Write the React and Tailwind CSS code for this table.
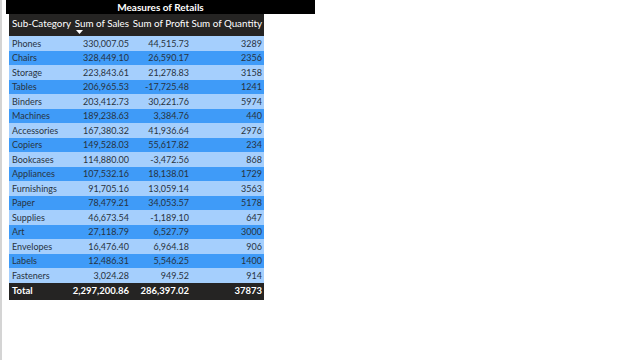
import React from "react";

const rows = [
  ["Phones", "330,007.05", "44,515.73", "3289"],
  ["Chairs", "328,449.10", "26,590.17", "2356"],
  ["Storage", "223,843.61", "21,278.83", "3158"],
  ["Tables", "206,965.53", "-17,725.48", "1241"],
  ["Binders", "203,412.73", "30,221.76", "5974"],
  ["Machines", "189,238.63", "3,384.76", "440"],
  ["Accessories", "167,380.32", "41,936.64", "2976"],
  ["Copiers", "149,528.03", "55,617.82", "234"],
  ["Bookcases", "114,880.00", "-3,472.56", "868"],
  ["Appliances", "107,532.16", "18,138.01", "1729"],
  ["Furnishings", "91,705.16", "13,059.14", "3563"],
  ["Paper", "78,479.21", "34,053.57", "5178"],
  ["Supplies", "46,673.54", "-1,189.10", "647"],
  ["Art", "27,118.79", "6,527.79", "3000"],
  ["Envelopes", "16,476.40", "6,964.18", "906"],
  ["Labels", "12,486.31", "5,546.25", "1400"],
  ["Fasteners", "3,024.28", "949.52", "914"],
];

const font = { fontFamily: 'Lato, "Open Sans", sans-serif' };

export default function App() {
  return (
    <div className="w-[640px] h-[360px] bg-white overflow-hidden border-l-2 border-[#d4d4d4]" style={font}>
      <div className="ml-[4px] w-[309px] h-[14px] bg-black text-white text-[10px] font-bold flex items-center justify-center leading-none">
        Measures of Retails
      </div>
      <div className="ml-[7px] w-[255px]">
        <div className="grid grid-cols-[62px_60px_60px_73px] h-[22px] bg-[#252423] text-white text-[9.8px] leading-none whitespace-nowrap">
          <div className="pl-[3px] pt-[5px]">Sub-Category</div>
          <div className="relative flex justify-end pr-[2px] pt-[5px]">
            Sum of Sales
            <svg className="absolute left-[5px] top-[16px]" width="7" height="4" viewBox="0 0 7 4">
              <path d="M0 0 L7 0 L3.5 4 Z" fill="white" />
            </svg>
          </div>
          <div className="flex justify-end pr-[2px] pt-[5px]">Sum of Profit</div>
          <div className="flex justify-end pr-[2px] pt-[5px]">Sum of Quantity</div>
        </div>
        {rows.map((r, i) => (
          <div
            key={r[0]}
            className={`grid grid-cols-[62px_60px_60px_73px] h-[14.5px] items-center text-[9px] leading-none text-[#28333f] whitespace-nowrap ${
              i % 2 === 0 ? "bg-[#a5cffd]" : "bg-[#3f9bf8]"
            }`}
          >
            <div className="pl-[3px]">{r[0]}</div>
            <div className="text-right pr-[2px]">{r[1]}</div>
            <div className="text-right pr-[2px]">{r[2]}</div>
            <div className="text-right pr-[2px]">{r[3]}</div>
          </div>
        ))}
        <div className="grid grid-cols-[62px_60px_60px_73px] h-[17px] items-center bg-[#252423] text-white text-[9.5px] font-bold leading-none whitespace-nowrap">
          <div className="pl-[3px]">Total</div>
          <div className="text-right pr-[2px]">2,297,200.86</div>
          <div className="text-right pr-[2px]">286,397.02</div>
          <div className="text-right pr-[2px]">37873</div>
        </div>
      </div>
    </div>
  );
}
